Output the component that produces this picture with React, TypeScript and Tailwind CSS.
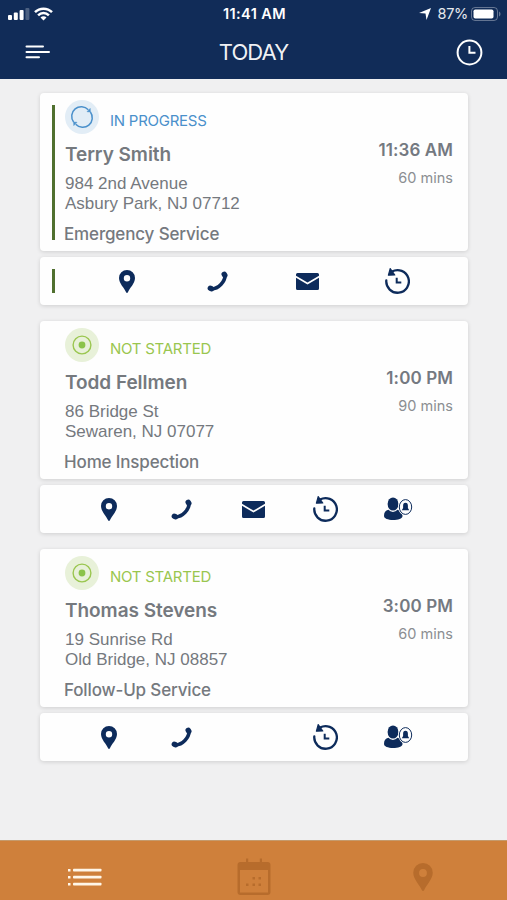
interface Job {
  id: string;
  status: 'in-progress' | 'not-started';
  name: string;
  street: string;
  city: string;
  service: string;
  time: string;
  duration: string;
  actions: string[];
}

const jobs: Job[] = [
  {
    id: '1',
    status: 'in-progress',
    name: 'Terry Smith',
    street: '984 2nd Avenue',
    city: 'Asbury Park, NJ 07712',
    service: 'Emergency Service',
    time: '11:36 AM',
    duration: '60 mins',
    actions: ['map', 'call', 'mail', 'history'],
  },
  {
    id: '2',
    status: 'not-started',
    name: 'Todd Fellmen',
    street: '86 Bridge St',
    city: 'Sewaren, NJ 07077',
    service: 'Home Inspection',
    time: '1:00 PM',
    duration: '90 mins',
    actions: ['map', 'call', 'mail', 'history', 'notify'],
  },
  {
    id: '3',
    status: 'not-started',
    name: 'Thomas Stevens',
    street: '19 Sunrise Rd',
    city: 'Old Bridge, NJ 08857',
    service: 'Follow-Up Service',
    time: '3:00 PM',
    duration: '60 mins',
    actions: ['map', 'call', '', 'history', 'notify'],
  },
];

function PinIcon({ className }: { className: string }) {
  return (
    <svg className={className} viewBox="0 0 16 23" fill="currentColor">
      <path
        fillRule="evenodd"
        d="M8 0a8 8 0 0 0-8 8c0 5.600 5.400 10 7.100 14.300.4.9 1.400.9 1.800 0C10.600 18 16 13.600 16 8a8 8 0 0 0-8-8zm0 5a3.200 3.200 0 1 1 0 6.400A3.200 3.200 0 0 1 8 5z"
      />
    </svg>
  );
}

function ActionIcon({ name }: { name: string }) {
  switch (name) {
    case 'map':
      return <PinIcon className="w-4 h-[23px]" />;
    case 'call':
      return (
        <svg width="21" height="21" viewBox="0 0 21 21" fill="none" stroke="currentColor" strokeLinecap="round">
          <path d="M18.200 4C18 11 11.500 17.600 4.500 18" strokeWidth="3.600" />
          <path d="M17.200 3.300l.6.9M3.300 17.300l1.300.5" strokeWidth="5.400" />
        </svg>
      );
    case 'mail':
      return (
        <svg width="23" height="17" viewBox="0 0 23 17" fill="currentColor">
          <path d="M1.500 0h20A1.500 1.500 0 0 1 23 1.500v1.300L11.500 9.600 0 2.800V1.500A1.500 1.500 0 0 1 1.500 0z" />
          <path d="M0 4.800l11.500 6.700L23 4.800v10.700a1.500 1.500 0 0 1-1.500 1.500h-20A1.500 1.500 0 0 1 0 15.500z" />
        </svg>
      );
    case 'history':
      return (
        <svg width="26" height="28" viewBox="0 0 26 28" fill="none" stroke="currentColor">
          <path d="M2.300 13.500A11.300 11.300 0 1 0 8 4.600" strokeWidth="2.300" strokeLinecap="round" />
          <path d="M6.200 1.600L4.400 8.200l6.400-.2z" fill="currentColor" strokeWidth="1.200" strokeLinejoin="round" />
          <path d="M12.700 10.800v4.600h4.600" strokeWidth="2" />
        </svg>
      );
    case 'notify':
      return (
        <svg className="ml-[2px]" width="30" height="24" viewBox="0 0 30 24" fill="currentColor">
          <ellipse cx="10" cy="7" rx="5.400" ry="6.600" />
          <path d="M5.400 12.800C2.500 13.500 1 15.500 1 19c0 2.400 4 4 9 4s9.500-1.400 9.500-4c0-3-2-5.500-5-6.200a6 6 0 0 1-9.100 0z" />
          <ellipse cx="22.500" cy="10" rx="7.300" ry="8.600" fill="#fefefe" />
          <ellipse cx="22.500" cy="10" rx="6.200" ry="7.400" fill="none" stroke="currentColor" strokeWidth="1" />
          <path d="M22.500 5.700c-1.700 0-2.400 1.300-2.400 3V11l-1.300 2.200h7.400L24.900 11V8.700c0-1.700-.7-3-2.400-3z" />
        </svg>
      );
    default:
      return null;
  }
}

function StatusBadge({ status }: { status: Job['status'] }) {
  if (status === 'in-progress') {
    return (
      <div className="flex h-[34px] items-center text-[#4a90cb]">
        <div className="flex size-[34px] items-center justify-center rounded-full bg-[#e2edf6]">
          <svg width="24" height="24" viewBox="0 0 24 24" fill="none" stroke="currentColor" strokeWidth="1.500">
            <path d="M3.600 17A9.600 9.600 0 0 1 18.300 4.700M20.400 7A9.600 9.600 0 0 1 5.700 19.300" />
            <path d="M20.200 3.400l.2 3.600-3.400-.3zM3.800 20.600L3.600 17l3.400.3z" fill="currentColor" strokeWidth=".5" />
          </svg>
        </div>
        <span className="ml-[11px] mt-[7px] text-[15px] leading-5 tracking-[-0.25px]">IN PROGRESS</span>
      </div>
    );
  }
  return (
    <div className="flex h-[34px] items-center text-[#9ac64f]">
      <div className="flex size-[34px] items-center justify-center rounded-full bg-[#e8f1d9]">
        <svg width="20" height="20" viewBox="0 0 20 20" fill="none" stroke="currentColor">
          <circle cx="10" cy="10" r="8.900" strokeWidth="1.400" />
          <circle cx="10" cy="10" r="3.400" fill="#8bc34a" stroke="none" />
        </svg>
      </div>
      <span className="ml-[11px] mt-[7px] text-[15px] leading-5 tracking-[-0.25px]">NOT STARTED</span>
    </div>
  );
}

function JobCard({ job }: { job: Job }) {
  const active = job.status === 'in-progress';

  return (
    <div className="h-[228px]">
      <div className="flex h-[158px] rounded bg-[#fefefe] pl-3 pr-[15px] shadow-[0_1px_4px_rgba(0,0,0,0.14)]">
        <div className={`mt-3 h-[135px] w-[3px] ${active ? 'bg-[#50702f]' : ''}`} />
        <div className="ml-[10px] flex-1 whitespace-nowrap pt-[7px] text-[#75797e]">
          <StatusBadge status={job.status} />
          <p className="mt-[9px] text-[19px] font-semibold leading-6 tracking-[-0.05px]">{job.name}</p>
          <p className="mt-[7px] font-['Liberation_Sans',sans-serif] text-[17px] leading-[19.500px]">
            {job.street}
            <br />
            {job.city}
          </p>
          <p className="mt-[9px] -ml-px text-[17px] font-medium leading-6 tracking-[-0.15px]">{job.service}</p>
        </div>
        <div className="whitespace-nowrap pt-[45px] text-right">
          <p className="text-[17px] font-semibold leading-6 tracking-[0.1px] text-[#747981]">{job.time}</p>
          <p className="mt-[6px] text-[14.500px] leading-5 text-[#8b8e92]">{job.duration}</p>
        </div>
      </div>

      {/* Action bar */}
      <div className="mt-[6px] flex h-[48px] items-center rounded bg-[#fefefe] pl-3 text-[#0d2b5b] shadow-[0_1px_4px_rgba(0,0,0,0.14)]">
        <div className={`h-6 w-[3px] ${active ? 'bg-[#50702f]' : ''}`} />
        <div className={`flex w-[360px] items-center ${active ? 'ml-[27px]' : 'ml-[18px]'}`}>
          {job.actions.map((action, i) => (
            <button key={i} className="flex flex-1 items-center justify-center">
              <ActionIcon name={action} />
            </button>
          ))}
        </div>
      </div>
    </div>
  );
}

export default function App() {
  return (
    <div className="flex h-[900px] w-[507px] flex-col overflow-hidden bg-[#f0f0f1] font-['Inter',sans-serif]">
      {/* Header */}
      <header className="h-[79px] bg-[#112c58] text-white">
        <div className="grid h-7 grid-cols-3 items-center pl-2 pr-[6px]">
          <div className="flex items-center gap-[4px]">
            <svg width="22" height="12" viewBox="0 0 22 12" fill="currentColor">
              <rect x="0" y="7" width="4" height="5" rx="1" />
              <rect x="5.800" y="4.500" width="4" height="7.500" rx="1" />
              <rect x="11.600" y="2" width="4" height="10" rx="1" />
              <rect x="17.400" y="0" width="4" height="12" rx="1" opacity=".25" />
            </svg>
            <svg width="19" height="14" viewBox="0 0 19 14" fill="none" stroke="currentColor" strokeWidth="2.500">
              <path d="M1 5.200a12 12 0 0 1 17 0M4.100 8.300a7.600 7.600 0 0 1 10.800 0" />
              <path d="M9.500 13.600l-3-3a4.200 4.200 0 0 1 6 0z" fill="currentColor" stroke="none" />
            </svg>
          </div>
          <span className="text-center text-[14.500px] font-semibold tracking-[0.4px]">11:41 AM</span>
          <div className="flex items-center justify-end">
            <svg width="12" height="12" viewBox="0 0 12 12" fill="currentColor">
              <path d="M12 0L7.500 12l-1-6.500L0 5z" />
            </svg>
            <span className="ml-[6px] text-[14.500px] tracking-[-0.3px] text-white/90">87%</span>
            <svg className="ml-[3px]" width="30" height="14" viewBox="0 0 30 14">
              <rect x=".5" y=".5" width="26" height="13" rx="3.500" fill="none" stroke="#fff" opacity=".35" />
              <rect x="2.500" y="2.500" width="20" height="9" rx="1.800" fill="#fff" />
              <path d="M28 4.500c2 .8 2 4.200 0 5z" fill="#fff" opacity=".35" />
            </svg>
          </div>
        </div>
        <div className="flex h-12 items-center justify-between pl-[25px] pr-[24px]">
          <svg width="26" height="14" viewBox="0 0 26 14" fill="none" stroke="currentColor" strokeWidth="2" strokeLinecap="round">
            <path d="M1.500 1.500h16.500M1.500 7h22.500M1.500 12.200h12.500" />
          </svg>
          <h1 className="text-[22px] font-normal leading-6 tracking-[-0.9px] text-white/95">TODAY</h1>
          <svg width="27" height="27" viewBox="0 0 27 27" fill="none" stroke="currentColor" strokeWidth="2">
            <circle cx="13.500" cy="13.500" r="11.900" />
            <path d="M13.400 7v6.700h6.100" />
          </svg>
        </div>
      </header>

      {/* Job list */}
      <main className="flex-1 pl-10 pt-[14px] pr-[39px]">
        {jobs.map(job => (
          <JobCard key={job.id} job={job} />
        ))}
      </main>

      {/* Tab bar */}
      <nav className="grid h-[60px] grid-cols-3 justify-items-center border-t border-[#c59a6c] bg-[#cf803b] pt-4 text-[#b76c2c]">
        <svg className="mt-[11px]" width="34" height="19" viewBox="0 0 34 19" fill="#fff6e8">
          <path d="M0 1h2.500v2.500H0zM0 8h2.500v2.500H0zM0 15h2.500v2.500H0z" />
          <rect x="5" y=".8" width="28.500" height="2.800" rx=".8" />
          <rect x="5" y="7.800" width="28.500" height="2.800" rx=".8" />
          <rect x="5" y="14.800" width="28.500" height="2.800" rx=".8" />
        </svg>
        <svg width="34" height="39" viewBox="0 0 34 39" fill="currentColor">
          <path
            fillRule="evenodd"
            d="M9 1.500h2.200V5h11.600V1.500H25V5h5.500a3 3 0 0 1 3 3v27a3 3 0 0 1-3 3h-27a3 3 0 0 1-3-3V8a3 3 0 0 1 3-3H9zM3 13v22.500h28V13z"
          />
          <path d="M15.500 20h2.500v2.500h-2.500zM21.500 20h2.500v2.500h-2.500zM9 26.500h2.500v2.500H9zM15.500 26.500h2.500v2.500h-2.500zM21.500 26.500h2.500v2.500h-2.500z" />
        </svg>
        <PinIcon className="mt-[6px] h-7 w-5" />
      </nav>
    </div>
  );
}
